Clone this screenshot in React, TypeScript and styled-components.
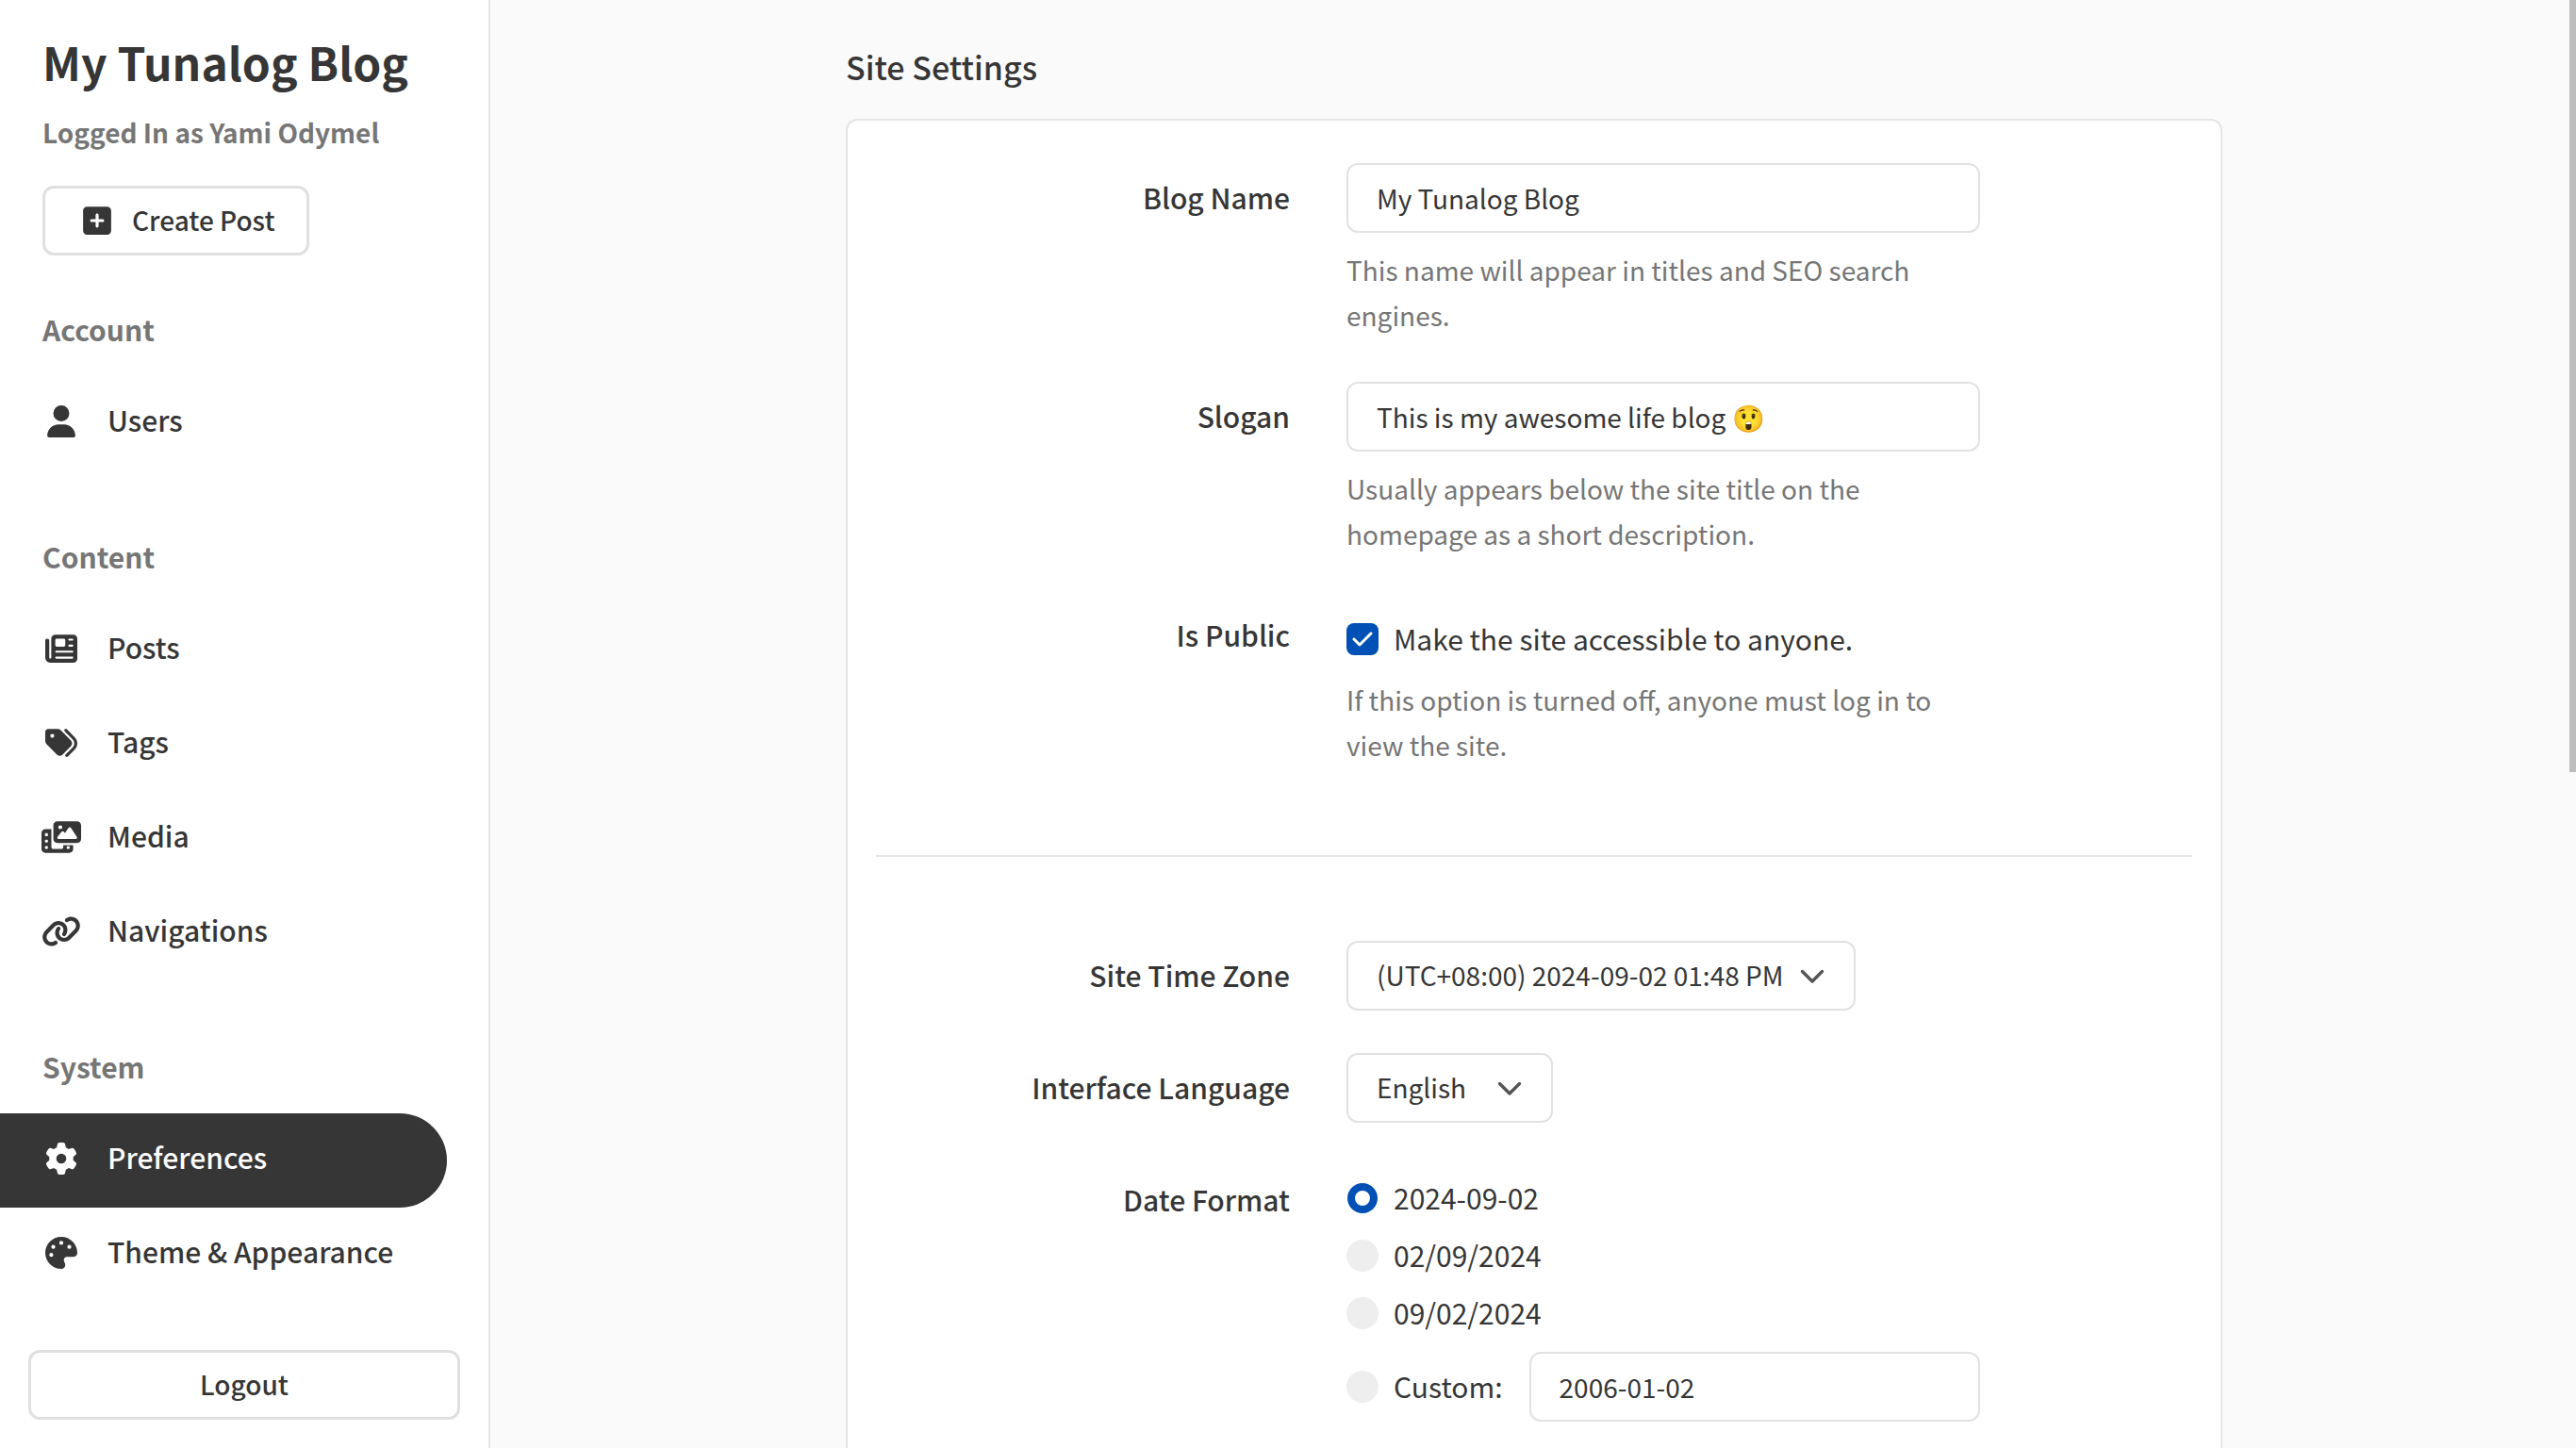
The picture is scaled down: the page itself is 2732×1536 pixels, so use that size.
import React from "react";
import styled, { createGlobalStyle, css } from "styled-components";
import {
  FaCheck,
  FaGear,
  FaLink,
  FaNewspaper,
  FaPalette,
  FaPhotoFilm,
  FaSquarePlus,
  FaTags,
  FaUser,
} from "react-icons/fa6";

const GlobalStyle = createGlobalStyle`
  *, *::before, *::after { box-sizing: border-box; }
  body {
    margin: 0;
    background: #fafafa;
    color: #363636;
    font-family: "Noto Sans CJK TC", "Noto Sans", sans-serif;
    font-size: 30px;
    line-height: 44px;
  }
  input, select, button { font: inherit; color: inherit; margin: 0; }
`;

const Page = styled.div`
  display: flex;
  height: 100vh;
  overflow: hidden;
`;

const Sidebar = styled.aside`
  display: flex;
  flex-direction: column;
  flex: 0 0 520px;
  padding: 35px 0 30px;
  background: #fff;
  border-right: 2px solid #e5e5e5;
`;

const Profile = styled.header`
  padding: 0 45px;
`;

const BlogTitle = styled.h1`
  margin: 0 0 23px;
  font-size: 48px;
  line-height: 60px;
  font-weight: 600;
`;

const LoggedIn = styled.p`
  margin: 0 0 35px;
  color: #767676;
  font-size: 28px;
  font-weight: 600;
`;

const Button = styled.button<{ $block?: boolean }>`
  display: flex;
  align-items: center;
  justify-content: center;
  gap: 22px;
  height: 74px;
  padding: 0 33px 0 40px;
  background: #fff;
  border: 3px solid #e0e0e0;
  border-radius: 12px;
  font-size: 28px;
  font-weight: 500;
  cursor: pointer;
  ${(p) =>
    p.$block &&
    css`
      margin: auto 30px 0;
      padding: 0;
    `}
  svg {
    width: 30px;
    height: 34px;
  }
`;

const ButtonText = styled.span`
  padding-bottom: 2px;
`;

const NavSection = styled.section<{ $first?: boolean }>`
  margin-top: ${(p) => (p.$first ? 56 : 69)}px;
`;

const NavHeading = styled.h2`
  margin: 0 0 28px;
  padding-left: 45px;
  color: #767676;
  font-size: 30px;
  font-weight: 600;
`;

const NavList = styled.ul`
  margin: 0;
  padding: 0;
  list-style: none;
`;

const NavLink = styled.a<{ $active?: boolean }>`
  display: flex;
  align-items: center;
  gap: 28px;
  height: 100px;
  margin-right: 44px;
  padding: 0 0 4px 44px;
  border-radius: 0 50px 50px 0;
  color: ${(p) => (p.$active ? "#fff" : "inherit")};
  background: ${(p) => (p.$active ? "#363636" : "transparent")};
  font-weight: 500;
  text-decoration: none;
  svg {
    width: 42px;
    height: 34px;
  }
`;

const NavText = styled.span`
  padding-bottom: 4px;
`;

const Main = styled.main`
  display: flex;
  flex: 1;
  flex-direction: column;
  align-items: center;
  min-width: 0;
  padding: 46px 0 0 2px;
`;

const Content = styled.div`
  display: flex;
  flex: 1;
  flex-direction: column;
  width: 100%;
  max-width: 1460px;
`;

const PageHeading = styled.h2`
  margin: 0 0 30px;
  font-size: 34px;
  line-height: 50px;
  font-weight: 500;
`;

const Card = styled.form`
  flex: 1;
  padding: 45px 30px 0;
  background: #fff;
  border: 2px solid #e5e5e5;
  border-bottom: 0;
  border-radius: 12px 12px 0 0;
`;

const Fields = styled.div<{ $gap: number }>`
  display: flex;
  flex-direction: column;
  gap: ${(p) => p.$gap}px;
`;

const Row = styled.div`
  display: grid;
  grid-template-columns: minmax(200px, 439px) minmax(0, 672px);
  column-gap: 60px;
`;

const labelStyle = css`
  padding-top: 14px;
  text-align: right;
  font-weight: 500;
`;

const Label = styled.label`
  ${labelStyle}
`;

const GroupLabel = styled.div`
  ${labelStyle}
`;

const InputWrap = styled.div`
  flex: 1;
  min-width: 0;
`;

const TextInput = styled.input`
  display: block;
  width: 100%;
  height: 74px;
  padding: 0 30px;
  background: #fff;
  border: 2px solid #e2e2e2;
  border-radius: 12px;
  font-size: 28px;
  outline: none;
`;

const Help = styled.p`
  margin: 15px 0 0;
  padding-right: 30px;
  color: #767676;
  font-size: 28px;
  line-height: 48px;
`;

const Divider = styled.hr`
  height: 2px;
  margin: 93px 0 89px;
  background: #e5e5e5;
  border: 0;
`;

const SelectWrap = styled.div`
  position: relative;
  display: inline-flex;
  justify-self: start;
`;

const Select = styled.select<{ $min?: number }>`
  appearance: none;
  height: 74px;
  min-width: ${(p) => p.$min ?? 0}px;
  padding: 0 74px 2px 30px;
  background: #fff;
  border: 2px solid #e2e2e2;
  border-radius: 12px;
  font-size: 28px;
  outline: none;
`;

const Chevron = styled.svg`
  position: absolute;
  top: 30px;
  right: 33px;
  width: 26px;
  height: 16px;
  fill: none;
  stroke: #555;
  stroke-width: 3.4;
  stroke-linecap: round;
  stroke-linejoin: round;
  pointer-events: none;
`;

const Choice = styled.label`
  display: flex;
  align-items: center;
  gap: 16px;
`;

const CheckArea = styled.div`
  padding-top: 16px;
  > label {
    height: 50px;
  }
`;

const ChoiceText = styled.span`
  padding-bottom: 2px;
`;

const CheckWrap = styled.span`
  position: relative;
  display: flex;
  svg {
    position: absolute;
    top: 5px;
    left: 5px;
    font-size: 24px;
    color: #fff;
    pointer-events: none;
  }
`;

const Checkbox = styled.input`
  appearance: none;
  width: 34px;
  height: 34px;
  border-radius: 8px;
  background: #eee;
  &:checked {
    background: #0050b5;
  }
`;

const Radio = styled.input`
  appearance: none;
  width: 34px;
  height: 34px;
  border-radius: 50%;
  background: #eee;
  &:checked {
    width: 32px;
    height: 32px;
    margin: 1px;
    border: 8px solid #0050b5;
    background: #fff;
  }
`;

const RadioList = styled.div`
  display: flex;
  flex-direction: column;
  gap: 15px;
  padding-top: 12px;
`;

const CustomRow = styled.div`
  display: flex;
  align-items: center;
  gap: 28px;
  margin-top: 3px;
`;

const ScrollThumb = styled.div`
  position: fixed;
  top: 0;
  right: 0;
  width: 7px;
  height: 819px;
  background: #bdbdbd;
`;

type Item = { text: string; icon: React.ReactNode; active?: boolean };

const sections: { title: string; items: Item[] }[] = [
  { title: "Account", items: [{ text: "Users", icon: <FaUser /> }] },
  {
    title: "Content",
    items: [
      { text: "Posts", icon: <FaNewspaper /> },
      { text: "Tags", icon: <FaTags /> },
      { text: "Media", icon: <FaPhotoFilm /> },
      { text: "Navigations", icon: <FaLink /> },
    ],
  },
  {
    title: "System",
    items: [
      { text: "Preferences", icon: <FaGear />, active: true },
      { text: "Theme & Appearance", icon: <FaPalette /> },
    ],
  },
];

const dateFormats = ["2024-09-02", "02/09/2024", "09/02/2024"];

function Dropdown({ id, value, min }: { id: string; value: string; min?: number }) {
  return (
    <SelectWrap>
      <Select id={id} $min={min}>
        <option>{value}</option>
      </Select>
      <Chevron viewBox="0 0 26 16" aria-hidden="true">
        <path d="M2.5 2.5 13 13 23.5 2.5" />
      </Chevron>
    </SelectWrap>
  );
}

export default function App() {
  return (
    <Page>
      <GlobalStyle />
      <Sidebar>
        <Profile>
          <BlogTitle>My Tunalog Blog</BlogTitle>
          <LoggedIn>Logged In as Yami Odymel</LoggedIn>
          <Button type="button">
            <FaSquarePlus />
            <ButtonText>Create Post</ButtonText>
          </Button>
        </Profile>
        {sections.map((section, i) => (
          <NavSection key={section.title} $first={i === 0}>
            <NavHeading>{section.title}</NavHeading>
            <NavList>
              {section.items.map((item) => (
                <li key={item.text}>
                  <NavLink href="#" $active={item.active}>
                    {item.icon}
                    <NavText>{item.text}</NavText>
                  </NavLink>
                </li>
              ))}
            </NavList>
          </NavSection>
        ))}
        <Button type="button" $block>
          <ButtonText>Logout</ButtonText>
        </Button>
      </Sidebar>
      <Main>
        <Content>
          <PageHeading>Site Settings</PageHeading>
          <Card>
            <Fields $gap={47}>
              <Row>
                <Label htmlFor="blog-name">Blog Name</Label>
                <div>
                  <TextInput id="blog-name" defaultValue="My Tunalog Blog" />
                  <Help>This name will appear in titles and SEO search engines.</Help>
                </div>
              </Row>
              <Row>
                <Label htmlFor="slogan">Slogan</Label>
                <div>
                  <TextInput id="slogan" defaultValue="This is my awesome life blog 😲" />
                  <Help>Usually appears below the site title on the homepage as a short description.</Help>
                </div>
              </Row>
              <Row>
                <GroupLabel>Is Public</GroupLabel>
                <CheckArea>
                  <Choice>
                    <CheckWrap>
                      <Checkbox type="checkbox" defaultChecked />
                      <FaCheck />
                    </CheckWrap>
                    <ChoiceText>Make the site accessible to anyone.</ChoiceText>
                  </Choice>
                  <Help>If this option is turned off, anyone must log in to view the site.</Help>
                </CheckArea>
              </Row>
            </Fields>
            <Divider />
            <Fields $gap={45}>
              <Row>
                <Label htmlFor="time-zone">Site Time Zone</Label>
                <Dropdown id="time-zone" value="(UTC+08:00) 2024-09-02 01:48 PM" />
              </Row>
              <Row>
                <Label htmlFor="language">Interface Language</Label>
                <Dropdown id="language" value="English" min={219} />
              </Row>
              <Row>
                <GroupLabel id="date-format">Date Format</GroupLabel>
                <RadioList role="radiogroup" aria-labelledby="date-format">
                  {dateFormats.map((format, i) => (
                    <Choice key={format}>
                      <Radio type="radio" name="date-format" defaultChecked={i === 0} />
                      <ChoiceText>{format}</ChoiceText>
                    </Choice>
                  ))}
                  <CustomRow>
                    <Choice>
                      <Radio type="radio" name="date-format" />
                      <ChoiceText>Custom:</ChoiceText>
                    </Choice>
                    <InputWrap>
                      <TextInput aria-label="Custom date format" defaultValue="2006-01-02" />
                    </InputWrap>
                  </CustomRow>
                </RadioList>
              </Row>
            </Fields>
          </Card>
        </Content>
      </Main>
      <ScrollThumb />
    </Page>
  );
}
